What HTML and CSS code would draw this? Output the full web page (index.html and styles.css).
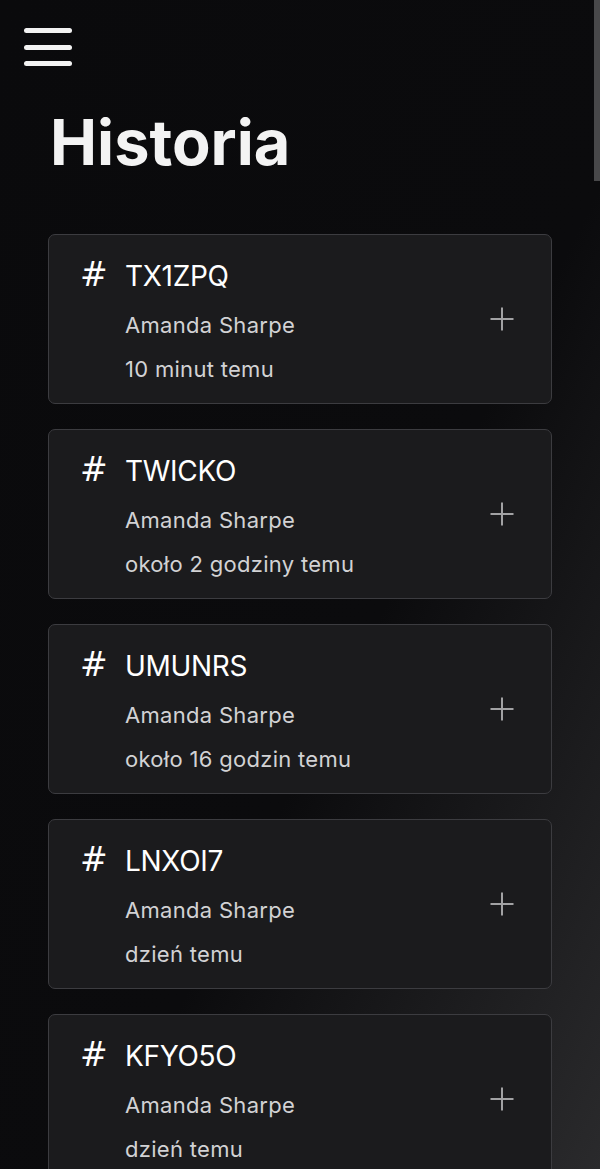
FILE: index.html
```html
<!DOCTYPE html>
<html lang="pl">
<head>
<meta charset="utf-8">
<title>Historia</title>
<link rel="stylesheet" href="styles.css">
</head>
<body>
<div class="scroll-thumb" aria-hidden="true"></div>
<header class="topbar">
  <button class="menu-btn" aria-label="Menu">
    <span class="menu-line"></span>
    <span class="menu-line"></span>
    <span class="menu-line"></span>
  </button>
</header>
<main class="page">
  <h1 class="title">Historia</h1>
  <ul class="history">
    <li class="card">
      <div class="card-body">
        <div class="card-head"><span class="hash">#</span><span class="code">TX1ZPQ</span></div>
        <div class="card-meta">
          <span class="meta">Amanda Sharpe</span>
          <span class="meta">10 minut temu</span>
        </div>
      </div>
      <svg class="plus" width="24" height="24" viewBox="0 0 24 24"><path d="M12 0.5v23M0.5 12h23"/></svg>
    </li>
    <li class="card">
      <div class="card-body">
        <div class="card-head"><span class="hash">#</span><span class="code">TWICKO</span></div>
        <div class="card-meta">
          <span class="meta">Amanda Sharpe</span>
          <span class="meta">około 2 godziny temu</span>
        </div>
      </div>
      <svg class="plus" width="24" height="24" viewBox="0 0 24 24"><path d="M12 0.5v23M0.5 12h23"/></svg>
    </li>
    <li class="card">
      <div class="card-body">
        <div class="card-head"><span class="hash">#</span><span class="code">UMUNRS</span></div>
        <div class="card-meta">
          <span class="meta">Amanda Sharpe</span>
          <span class="meta">około 16 godzin temu</span>
        </div>
      </div>
      <svg class="plus" width="24" height="24" viewBox="0 0 24 24"><path d="M12 0.5v23M0.5 12h23"/></svg>
    </li>
    <li class="card">
      <div class="card-body">
        <div class="card-head"><span class="hash">#</span><span class="code">LNXOI7</span></div>
        <div class="card-meta">
          <span class="meta">Amanda Sharpe</span>
          <span class="meta">dzień temu</span>
        </div>
      </div>
      <svg class="plus" width="24" height="24" viewBox="0 0 24 24"><path d="M12 0.5v23M0.5 12h23"/></svg>
    </li>
    <li class="card">
      <div class="card-body">
        <div class="card-head"><span class="hash">#</span><span class="code">KFYO5O</span></div>
        <div class="card-meta">
          <span class="meta">Amanda Sharpe</span>
          <span class="meta">dzień temu</span>
        </div>
      </div>
      <svg class="plus" width="24" height="24" viewBox="0 0 24 24"><path d="M12 0.5v23M0.5 12h23"/></svg>
    </li>
  </ul>
</main>
</body>
</html>
```

FILE: styles.css
```css
* { box-sizing: border-box; }

html {
  height: 100%;
  overflow: hidden;
  background: linear-gradient(to bottom right, #0a0a0c 0%, #0b0b0d 58%, #2a2a2c 100%);
  background-color: #0a0a0c;
}

body {
  margin: 0;
  height: 100%;
  overflow: hidden;
  font-family: Inter, "Noto Sans", sans-serif;
  color: #f4f4f4;
}

.scroll-thumb {
  position: fixed;
  top: 0;
  right: 0;
  width: 6px;
  height: 181px;
  background: #48484a;
}

.topbar {
  padding: 28px 0 0 24px;
  height: 72px;
}

.menu-btn {
  display: flex;
  flex-direction: column;
  gap: 11.5px;
  width: 48px;
  padding: 0;
  border: 0;
  background: none;
  cursor: pointer;
}

.menu-line {
  display: block;
  width: 48px;
  height: 5px;
  border-radius: 3px;
  background: #f2f2f2;
}

.page {
  padding: 0 48px 48px 48px;
}

.title {
  margin: 30px 0 0 2px;
  font-size: 63px;
  line-height: 80px;
  font-weight: 700;
  color: #f3f3f3;
}

.history {
  list-style: none;
  margin: 52px 0 0;
  padding: 0;
  display: flex;
  flex-direction: column;
  gap: 25px;
}

.card {
  height: 170px;
  display: flex;
  align-items: center;
  justify-content: space-between;
  padding: 0 37px 0 31px;
  background: #1b1b1d;
  border: 1px solid #3c3c40;
  border-radius: 7px;
}

.card-body {
  display: flex;
  flex-direction: column;
  padding-top: 1px;
}

.card-head {
  display: flex;
  align-items: baseline;
  line-height: 40px;
}

.hash {
  width: 45px;
  font-family: "DejaVu Sans", sans-serif;
  font-size: 33px;
  font-weight: 400;
  color: #ffffff;
}

.code {
  font-size: 28px;
  font-weight: 400;
  color: #ffffff;
  letter-spacing: -0.3px;
}

.card-meta {
  display: flex;
  flex-direction: column;
  gap: 14px;
  margin: 14px 0 0 45px;
}

.meta {
  font-size: 22px;
  line-height: 30px;
  color: #d2d2d4;
  letter-spacing: 0.3px;
}

.plus {
  flex: none;
  fill: none;
  stroke: #a2a2a4;
  stroke-width: 2;
}
```
